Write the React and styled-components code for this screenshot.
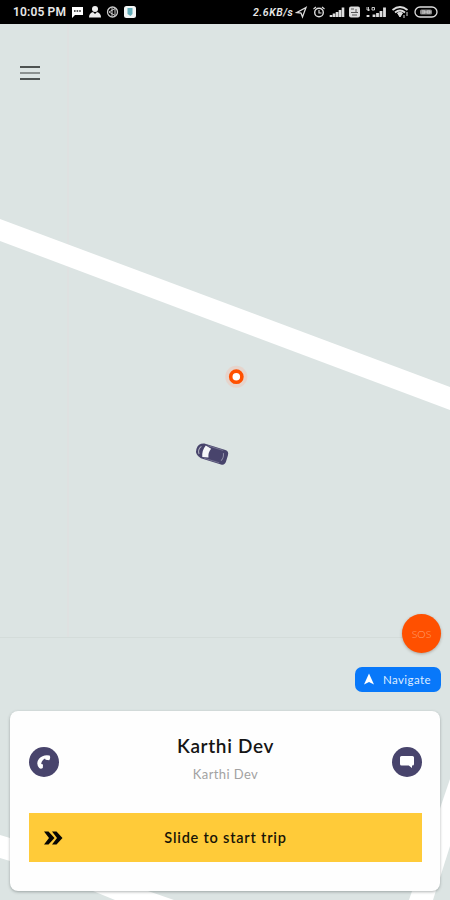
import React from "react";
import styled, { createGlobalStyle } from "styled-components";

const colors = {
  land: "#dce4e3",
  road: "#ffffff",
  indigo: "#48446c",
  orange: "#ff5000",
  blue: "#0878fa",
  yellow: "#ffcb39",
};

const GlobalStyle = createGlobalStyle`
  body {
    margin: 0;
    font-family: Lato, "Open Sans", sans-serif;
  }
  button {
    border: 0;
    padding: 0;
    font-family: inherit;
    cursor: pointer;
  }
`;

const Screen = styled.div`
  position: relative;
  display: flex;
  flex-direction: column;
  width: 450px;
  height: 900px;
  overflow: hidden;
  background: ${colors.land};
`;

const MapCanvas = styled.svg`
  position: absolute;
  inset: 0;
`;

const StatusBar = styled.header`
  position: relative;
  display: flex;
  align-items: center;
  justify-content: space-between;
  box-sizing: border-box;
  height: 24px;
  padding: 0 11px 0 13px;
  background: #000;
  color: #e8e8e8;
  font-family: Roboto, sans-serif;
  font-weight: 600;
`;

const StatusGroup = styled.div`
  display: flex;
  align-items: center;
  gap: ${({ $gap }) => $gap}px;
`;

const Clock = styled.span`
  width: 54px;
  font-size: 12px;
  letter-spacing: 0.15px;
  white-space: nowrap;
`;

const Speed = styled.span`
  width: 41px;
  font-size: 10.5px;
  font-style: italic;
  letter-spacing: 0.55px;
  white-space: nowrap;
`;

const Glyph = styled.svg`
  display: block;
  flex: none;
`;

const MenuButton = styled.button`
  position: relative;
  display: flex;
  flex-direction: column;
  gap: 4px;
  width: 20px;
  margin: 42px 0 0 20px;
  background: transparent;
`;

const MenuLine = styled.span`
  width: 100%;
  height: 2px;
  background: ${({ $light }) => ($light ? "#8b9190" : "#4e5352")};
`;

const MapActions = styled.div`
  position: relative;
  display: flex;
  flex-direction: column;
  align-items: flex-end;
  gap: 14px;
  margin: auto 9px 19px auto;
`;

const SosButton = styled.button`
  width: 39px;
  height: 39px;
  border-radius: 50%;
  background: ${colors.orange};
  color: #ffa275;
  font-size: 10.5px;
  font-weight: 300;
  box-shadow: 0 1px 3px rgba(80, 50, 30, 0.35);
`;

const NavigateButton = styled.button`
  display: flex;
  align-items: center;
  gap: 8px;
  box-sizing: border-box;
  width: 86px;
  height: 25px;
  padding: 0 0 1px 8px;
  border-radius: 7px;
  background: ${colors.blue};
  color: #dcebff;
  font-size: 11.5px;
  letter-spacing: 0.4px;
`;

const TripCard = styled.section`
  position: relative;
  box-sizing: border-box;
  width: 430px;
  height: 180px;
  margin: 0 0 9px 10px;
  padding: 22px 18px 0 19px;
  border-radius: 8px;
  background: #fefefe;
  box-shadow: 0 1px 3px rgba(60, 70, 70, 0.4);
`;

const RiderRow = styled.div`
  display: flex;
  align-items: center;
  justify-content: space-between;
  height: 58px;
`;

const RoundButton = styled.button`
  display: flex;
  align-items: center;
  justify-content: center;
  width: 30px;
  height: 30px;
  border-radius: 50%;
  background: ${colors.indigo};
`;

const Rider = styled.div`
  padding-bottom: 8px;
  text-align: center;
`;

const RiderName = styled.h1`
  margin: 0;
  color: #151515;
  font-size: 19px;
  line-height: 26px;
  font-weight: 600;
  letter-spacing: 0.65px;
`;

const RiderDetail = styled.p`
  margin: 6px 0 0;
  color: #a2a2a2;
  font-size: 13px;
  line-height: 18px;
  letter-spacing: 0.4px;
`;

const SlideBar = styled.div`
  display: grid;
  grid-template-columns: 48px 1fr 48px;
  align-items: center;
  height: 49px;
  margin-top: 22px;
  background: ${colors.yellow};
`;

const SlideLabel = styled.span`
  color: #171407;
  font-size: 14.5px;
  font-weight: 600;
  letter-spacing: 0.8px;
  text-align: center;
`;

const StreetMap = () => (
  <MapCanvas width="450" height="900" viewBox="0 0 450 900">
    <path d="M68 24V638" stroke="#dfe1e1" strokeWidth="2" />
    <path d="M0 637.5H402" stroke="#d4dcda" />
    <path d="M0 219L450 387V410L0 241Z" fill={colors.road} />
    <path d="M0 835L10 838L148 891L174 900H115L93 891L10 861L0 858Z" fill={colors.road} />
    <path d="M450 779L409 900H433L450 846Z" fill={colors.road} />
    <PickupPin />
    <Car />
  </MapCanvas>
);

const PickupPin = () => (
  <g transform="translate(236.3 376.7)">
    <circle r="11" fill="#e9cfc4" opacity="0.75" />
    <circle r="5.6" fill="#fff" stroke={colors.orange} strokeWidth="3.6" />
  </g>
);

const Car = () => (
  <g transform="translate(211.7 453.7) rotate(17)">
    <path
      d="M-10 -7.5H12Q16 -7.5 16 -3V3Q16 7.5 12 7.5H-9Q-16 6 -16 0T-10 -7.5Z"
      fill={colors.indigo}
    />
    <path d="M-12 -4Q-15 0 -12 4" fill="none" stroke="#b4b4c3" />
    <path d="M-8 -6L-2 -4.6Q-4 0 -2 4.6L-8 6Q-10.5 0 -8 -6Z" fill="#f5f6f8" />
    <path d="M-6 -6.5H10M-6 6.5H10" stroke="#8987a1" strokeWidth="0.6" />
    <path d="M11 -4Q13 0 11 4" fill="none" stroke="#9391aa" />
  </g>
);

const LeftStatusIcons = () => (
  <Glyph width="66" height="14" viewBox="71 5 66 14">
    <path d="M72 7H83V15H75L72 18Z" fill="#fff" />
    <path d="M74 11H81" stroke="#222" strokeWidth="1.6" strokeDasharray="1.6 1" />
    <circle cx="95" cy="9" r="3" fill="#eee" />
    <path d="M89 17.5Q89 13 93 12L95 14L97 12Q101 13 101 17.5Z" fill="#eee" />
    <circle cx="112.5" cy="12" r="5" fill="none" stroke="#ccc" strokeWidth="1.3" />
    <path d="M109 12L115 8.5V15.5ZM112 8V16" fill="none" stroke="#ccc" />
    <rect x="124" y="6" width="12" height="12" rx="2.5" fill="#f2f5f5" />
    <path d="M127.5 8H132.5V14L130.5 16L127.5 14Z" fill="#65aeba" />
  </Glyph>
);

const RightStatusIcons = () => (
  <Glyph width="144" height="14" viewBox="295 5 144 14" fill="none" stroke="#ddd">
    <path d="M306 7.5L297 12.5L301 13L302.5 17Z" strokeWidth="1.3" />
    <circle cx="319" cy="12.5" r="4.3" strokeWidth="1.4" />
    <path d="M313.5 9L316 7M324.5 9L322 7M319 10V13H321.5" strokeWidth="1.2" />
    <path
      d="M331 17V15M334 17V13.5M337 17V12M340 17V10M343 17V7.5"
      strokeWidth="2.6"
    />
    <rect x="349" y="6.5" width="11" height="11" rx="2" fill="#ddd" stroke="none" />
    <path d="M351 9H354M356 9V12M351 12.5H358M352 15H357" stroke="#555" />
    <path d="M367 7V10H370M368.5 7V11M372 7.5H374.5V10H372Z" strokeWidth="0.9" />
    <path
      d="M368 17V15M374 17V14.5M377.5 17V13M381 17V11M384.5 17V7.5"
      strokeWidth="2.8"
    />
    <path d="M392.5 10Q400 4 407.5 10M395 12.5Q400 8.5 405 12.5" strokeWidth="1.7" />
    <path d="M397.5 13L400 17L402.5 13Q400 11.5 397.5 13Z" fill="#ddd" />
    <path d="M404 15V18M407 12V16" strokeWidth="1" />
    <rect x="415" y="7" width="22" height="10" rx="5" strokeWidth="1.3" />
    <rect x="420" y="9.5" width="12" height="5" rx="1.5" fill="#888" stroke="none" />
    <path d="M422 11H425V13H422M427 11H430V13H427Z" strokeWidth="0.8" />
  </Glyph>
);

const PhoneIcon = () => (
  <Glyph width="16" height="16" viewBox="0 0 16 16">
    <path
      d="M3.2 14Q-.6 9.5 3 4.8Q7 .2 13.6 1.5Q14.9 3.6 13.2 6.3L9.6 5.8L9 4.6Q7 5.5 5.9 7.4Q5 9.2 5.4 10L7 10.5L6.8 14Q4.8 15.3 3.2 14Z"
      fill="#fff"
    />
  </Glyph>
);

const ChatIcon = () => (
  <Glyph width="16" height="14" viewBox="0 0 16 14">
    <path
      d="M2.5 1H13.5Q15 1 15 2.5V9Q15 10.5 13.5 10.5H13V13L9.8 10.5H2.5Q1 10.5 1 9V2.5Q1 1 2.5 1Z"
      fill="#fff"
    />
  </Glyph>
);

const App = () => (
  <>
    <GlobalStyle />
    <Screen>
      <StreetMap />
      <StatusBar>
        <StatusGroup $gap={4}>
          <Clock>10:05 PM</Clock>
          <LeftStatusIcons />
        </StatusGroup>
        <StatusGroup $gap={1}>
          <Speed>2.6KB/s</Speed>
          <RightStatusIcons />
        </StatusGroup>
      </StatusBar>
      <MenuButton aria-label="Menu">
        <MenuLine />
        <MenuLine $light />
        <MenuLine />
      </MenuButton>
      <MapActions>
        <SosButton>SOS</SosButton>
        <NavigateButton>
          <Glyph width="12" height="12" viewBox="0 0 12 12">
            <path d="M6 .5L11 11.5L6 9L1 11.5Z" fill="#fff" />
          </Glyph>
          Navigate
        </NavigateButton>
      </MapActions>
      <TripCard>
        <RiderRow>
          <RoundButton aria-label="Call">
            <PhoneIcon />
          </RoundButton>
          <Rider>
            <RiderName>Karthi Dev</RiderName>
            <RiderDetail>Karthi Dev</RiderDetail>
          </Rider>
          <RoundButton aria-label="Message">
            <ChatIcon />
          </RoundButton>
        </RiderRow>
        <SlideBar>
          <Glyph width="48" height="20" viewBox="0 0 48 20">
            <path
              d="M15 3.5H19.5L25.5 10L19.5 16.5H15L20 10ZM23 3.5H27.5L33.5 10L27.5 16.5H23L28 10Z"
              fill="#080704"
            />
          </Glyph>
          <SlideLabel>Slide to start trip</SlideLabel>
        </SlideBar>
      </TripCard>
    </Screen>
  </>
);

export default App;
